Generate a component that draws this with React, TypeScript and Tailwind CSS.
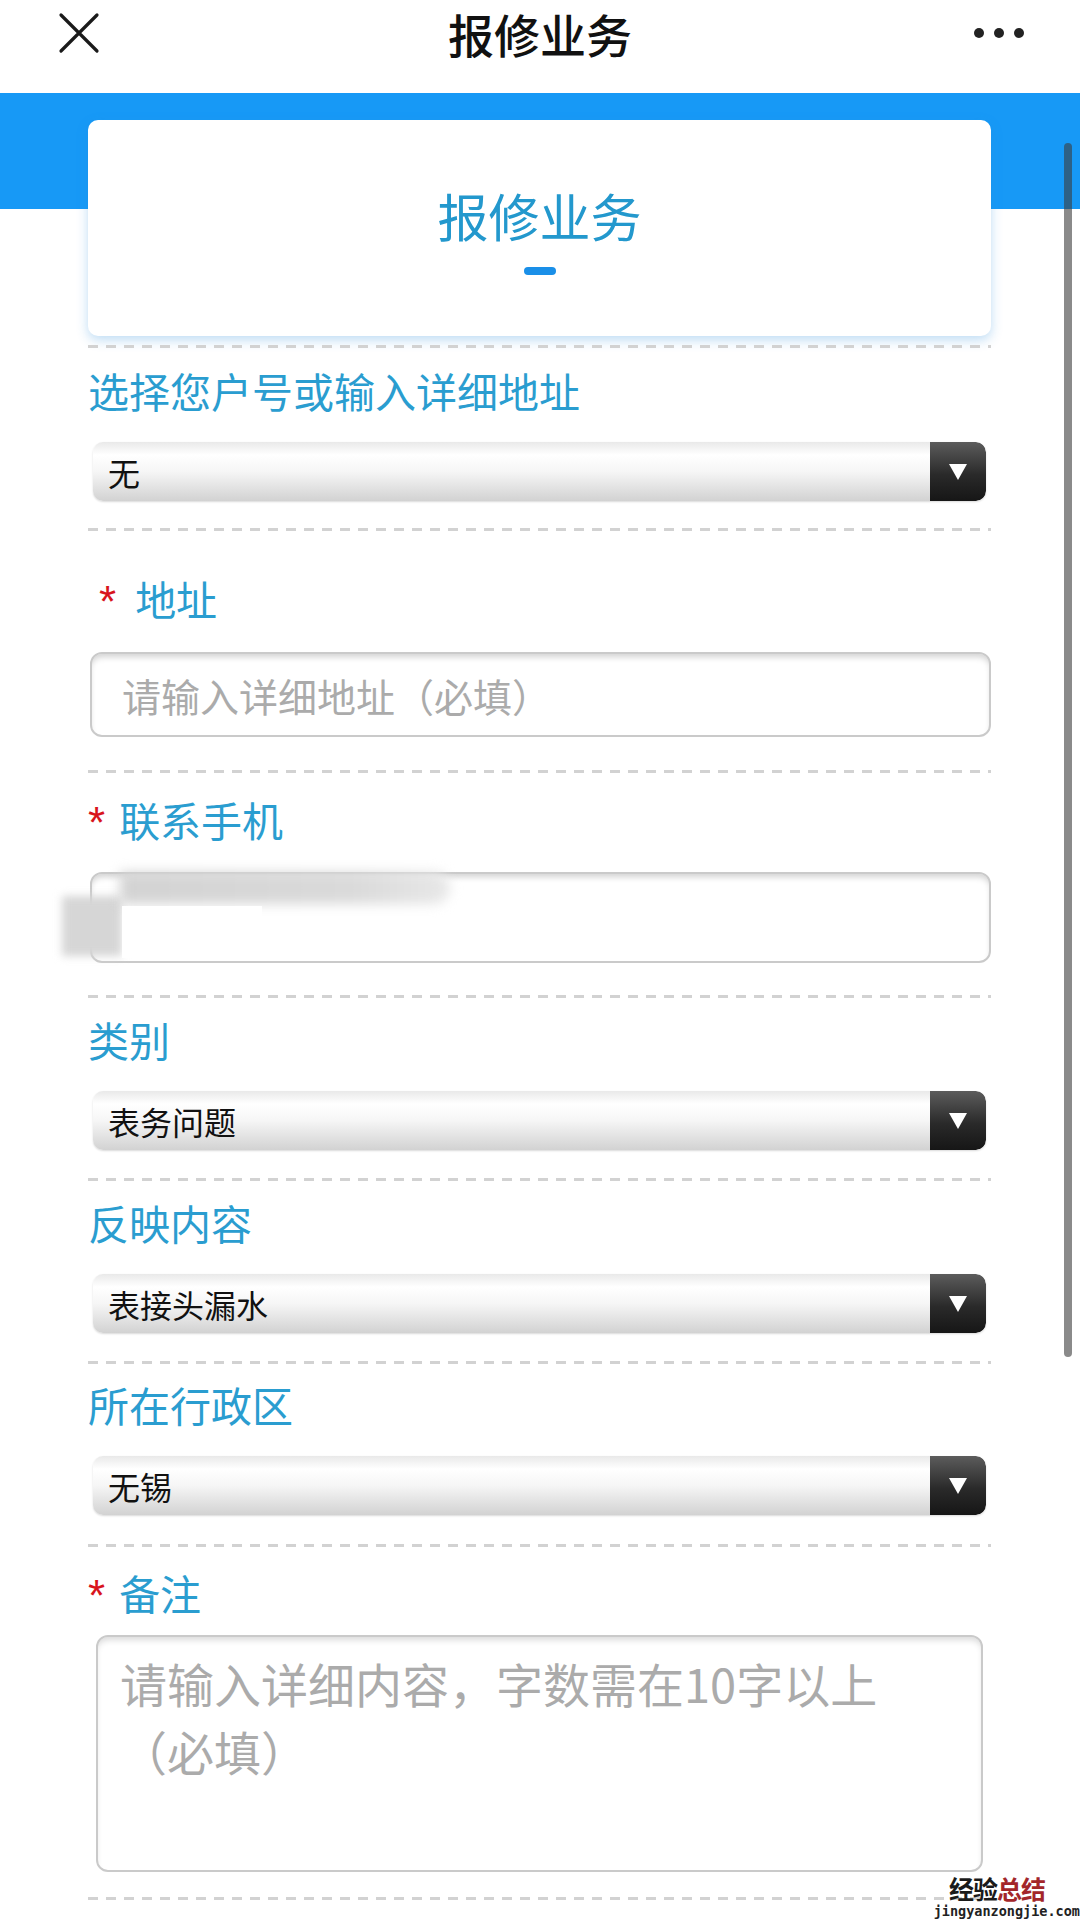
import React from "react";

const FONT = '"Noto Sans CJK SC", "Noto Sans", sans-serif';

function Dashed({ className = "" }: { className?: string }) {
  return (
    <div
      className={`h-[3px] bg-[repeating-linear-gradient(90deg,#d2d2d2_0_10px,transparent_10px_18px)] ${className}`}
    />
  );
}

function Label({
  text,
  required,
  className = "",
  starGap = "mr-[12px]",
}: {
  text: string;
  required?: boolean;
  className?: string;
  starGap?: string;
}) {
  return (
    <div className={`flex h-[48px] items-center pb-[6px] text-[41px] leading-[48px] text-[#2a9dd0] ${className}`}>
      {required && (
        <span
          className={`${starGap} self-start text-[44px] leading-[50px] text-[#d8141d]`}
          style={{ fontFamily: '"Liberation Sans", sans-serif' }}
        >
          *
        </span>
      )}
      <span>{text}</span>
    </div>
  );
}

function SelectBox({ value, className = "" }: { value: string; className?: string }) {
  return (
    <div
      className={`mx-[5px] flex h-[59px] items-stretch overflow-hidden rounded-[10px] bg-[linear-gradient(#e9e9e9,#ffffff_22%,#f6f6f6_50%,#d2d2d2)] shadow-[0_1px_2px_rgba(0,0,0,0.15)] ${className}`}
    >
      <div className="flex flex-1 items-center pl-[15px] text-[32px] leading-none text-[#111]">
        {value}
      </div>
      <div className="flex w-[56px] items-center justify-center rounded-r-[10px] bg-[linear-gradient(#5c5c5c,#2a2a2a_55%,#161616)]">
        <svg width="20" height="18" viewBox="0 0 20 18">
          <polygon points="1,1 19,1 10,17" fill="#ffffff" />
        </svg>
      </div>
    </div>
  );
}

export default function App() {
  return (
    <div
      className="relative h-[1924px] w-[1080px] overflow-hidden bg-white"
      style={{ fontFamily: FONT }}
    >
      {/* Header */}
      <div className="h-[93px] bg-white">
        <div className="grid h-[66px] grid-cols-[1fr_auto_1fr] items-center px-[56px]">
          <div className="flex items-center">
            <svg width="44" height="44" viewBox="0 0 44 44" className="ml-[1px]">
              <path d="M4 4 L40 40 M40 4 L4 40" stroke="#1a1a1a" strokeWidth="3.2" strokeLinecap="round" />
            </svg>
          </div>
          <div className="text-[46px] font-medium leading-none text-[#111]">报修业务</div>
          <div className="flex items-center justify-end gap-[10px]">
            <span className="h-[10px] w-[10px] rounded-full bg-[#222]" />
            <span className="h-[10px] w-[10px] rounded-full bg-[#222]" />
            <span className="h-[10px] w-[10px] rounded-full bg-[#222]" />
          </div>
        </div>
      </div>

      {/* Blue band + card */}
      <div className="bg-[linear-gradient(#1799f6_0_116px,#ffffff_116px)] pl-[88px] pr-[89px] pt-[27px]">
        <div className="flex h-[216px] flex-col items-center rounded-[10px] bg-white pt-[64px] shadow-[0_4px_12px_rgba(40,140,220,0.3)]">
          <div className="text-[51px] leading-[62px] text-[#2398cd]">报修业务</div>
          <div className="mt-[21px] h-[8px] w-[32px] rounded-full bg-[#1a8fe8]" />
        </div>
      </div>

      {/* Form */}
      <div className="pl-[88px] pr-[89px]">
        <Dashed className="mt-[9px]" />

        <Label text="选择您户号或输入详细地址" className="mt-[21px]" />
        <SelectBox value="无" className="mt-[25px]" />
        <Dashed className="mt-[27px]" />

        <Label text="地址" required className="mt-[46px] pl-[11px]" starGap="mr-[19px]" />
        <input
          className="mx-[2px] mt-[27px] block h-[85px] w-[901px] rounded-[12px] border-2 border-[#cacaca] bg-white px-[30px] text-[39px] text-[#333] shadow-[inset_0_5px_6px_-2px_rgba(0,0,0,0.18)] outline-none placeholder:text-[#ababab]"
          placeholder="请输入详细地址（必填）"
          readOnly
        />
        <Dashed className="mt-[33px]" />

        <Label text="联系手机" required className="mt-[25px]" starGap="mr-[14px]" />
        <div className="relative mx-[2px] mt-[26px]">
          <input
            className="block h-[91px] w-[901px] rounded-[12px] border-2 border-[#cacaca] bg-white px-[30px] text-[39px] text-[#333] shadow-[inset_0_5px_6px_-2px_rgba(0,0,0,0.18)] outline-none"
            readOnly
          />
          <div className="absolute left-[-28px] top-[24px] h-[60px] w-[60px] bg-[#d6d6d6] blur-[4px]" />
          <div className="absolute left-[30px] top-[0px] h-[32px] w-[330px] rounded-r-full bg-[linear-gradient(90deg,#d3d3d3,#dadada_70%,#e8e8e8)] blur-[6px]" />
          <div className="absolute left-[32px] top-[34px] h-[52px] w-[140px] bg-white" />
        </div>
        <Dashed className="mt-[32px]" />

        <Label text="类别" className="mt-[20px]" />
        <SelectBox value="表务问题" className="mt-[25px]" />
        <Dashed className="mt-[28px]" />

        <Label text="反映内容" className="mt-[20px]" />
        <SelectBox value="表接头漏水" className="mt-[25px]" />
        <Dashed className="mt-[28px]" />

        <Label text="所在行政区" className="mt-[19px]" />
        <SelectBox value="无锡" className="mt-[25px]" />
        <Dashed className="mt-[29px]" />

        <Label text="备注" required className="mt-[24px]" starGap="mr-[14px]" />
        <textarea
          className="mx-[8px] mt-[16px] block h-[237px] w-[887px] resize-none rounded-[12px] border-2 border-[#cacaca] bg-white px-[22px] pt-[12px] text-[47px] leading-[68px] text-[#333] shadow-[inset_0_5px_6px_-2px_rgba(0,0,0,0.15)] outline-none placeholder:text-[#ababab]"
          placeholder="请输入详细内容，字数需在10字以上（必填）"
          readOnly
        />
        <Dashed className="mt-[25px]" />

        <Label text="联系人" required className="mt-[20px]" starGap="mr-[14px]" />
      </div>

      {/* Scrollbar */}
      <div className="absolute left-[1064px] top-[143px] h-[1214px] w-[8px] rounded-full bg-[rgba(60,60,60,0.6)]" />

      {/* Watermark */}
      <div className="absolute bottom-[4px] right-[0px] flex flex-col items-end">
        <div className="mr-[35px] text-[25px] font-bold leading-[28px] tracking-[-1px]">
          <span className="text-[#1a1a1a]">经验</span>
          <span className="text-[#a3262a]">总结</span>
        </div>
        <div
          className="text-[13.5px] font-bold leading-[18px] text-[#222]"
          style={{ fontFamily: '"DejaVu Sans Mono", monospace' }}
        >
          jingyanzongjie.com
        </div>
      </div>
    </div>
  );
}
